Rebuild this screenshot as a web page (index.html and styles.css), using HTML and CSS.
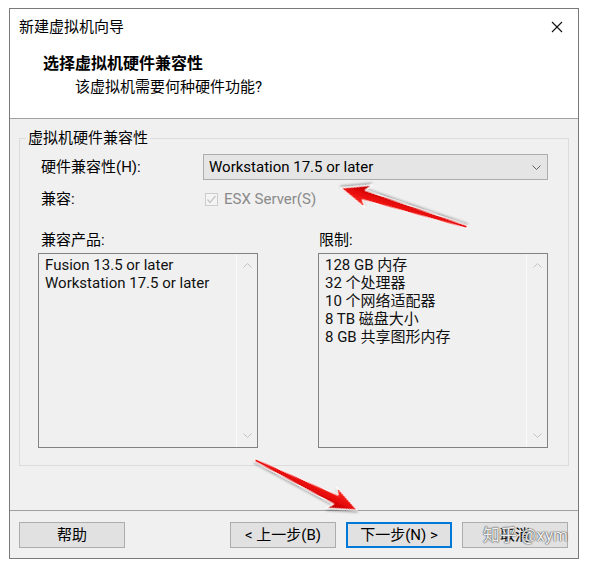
FILE: index.html
```html
<!DOCTYPE html>
<html lang="zh-CN">
<head>
<meta charset="utf-8">
<title>新建虚拟机向导</title>
<link rel="stylesheet" href="styles.css">
</head>
<body>
<div class="window">
  <div class="titlebar">
    <span class="title">新建虚拟机向导</span>
    <svg class="close" width="12" height="12" viewBox="0 0 12 12"><path d="M1 1L11 11M11 1L1 11" stroke="#111" stroke-width="1.1" fill="none"/></svg>
  </div>
  <div class="header">
    <div class="h-title">选择虚拟机硬件兼容性</div>
    <div class="h-sub">该虚拟机需要何种硬件功能?</div>
  </div>
  <div class="main">
    <div class="group">
      <div class="group-title">虚拟机硬件兼容性</div>
      <div class="row">
        <span class="label">硬件兼容性(H):</span>
        <div class="combo">
          <span class="combo-text">Workstation 17.5 or later</span>
          <svg class="chev" width="9" height="5" viewBox="0 0 9 5"><path d="M0.5 0.5L4.5 4.5L8.5 0.5" stroke="#606060" fill="none"/></svg>
        </div>
      </div>
      <div class="row row-compat">
        <span class="label">兼容:</span>
        <span class="check"><svg width="11" height="11" viewBox="0 0 11 11"><path d="M1.5 5.5L4 8.5L9.5 2" stroke="#c4c4c4" stroke-width="1.2" fill="none"/></svg></span>
        <span class="disabled">ESX Server(S)</span>
      </div>
      <div class="lists">
        <div class="col col-left">
          <div class="col-label">兼容产品:</div>
          <div class="listbox">
            <ul class="items">
              <li>Fusion 13.5 or later</li>
              <li>Workstation 17.5 or later</li>
            </ul>
            <div class="vscroll">
              <svg width="9" height="5" viewBox="0 0 9 5"><path d="M0.5 4.5L4.5 0.5L8.5 4.5" stroke="#c2c2c2" fill="none"/></svg>
              <svg width="9" height="5" viewBox="0 0 9 5"><path d="M0.5 0.5L4.5 4.5L8.5 0.5" stroke="#c2c2c2" fill="none"/></svg>
            </div>
          </div>
        </div>
        <div class="col col-right">
          <div class="col-label">限制:</div>
          <div class="listbox">
            <ul class="items">
              <li>128 GB 内存</li>
              <li>32 个处理器</li>
              <li>10 个网络适配器</li>
              <li>8 TB 磁盘大小</li>
              <li>8 GB 共享图形内存</li>
            </ul>
            <div class="vscroll">
              <svg width="9" height="5" viewBox="0 0 9 5"><path d="M0.5 4.5L4.5 0.5L8.5 4.5" stroke="#c2c2c2" fill="none"/></svg>
              <svg width="9" height="5" viewBox="0 0 9 5"><path d="M0.5 0.5L4.5 4.5L8.5 0.5" stroke="#c2c2c2" fill="none"/></svg>
            </div>
          </div>
        </div>
      </div>
    </div>
  </div>
  <div class="footer">
    <button class="btn">帮助</button>
    <div class="nav">
      <button class="btn">&lt; 上一步(B)</button>
      <button class="btn btn-default">下一步(N) &gt;</button>
      <button class="btn">取消</button>
    </div>
  </div>
  <div class="watermark">知乎 @xym</div>
</div>
<svg class="arrows" width="590" height="563" viewBox="0 0 590 563">
  <defs>
    <linearGradient id="red" x1="0" y1="0" x2="0" y2="1">
      <stop offset="0" stop-color="#ff3a2a"/>
      <stop offset="0.5" stop-color="#e80808"/>
      <stop offset="1" stop-color="#b80000"/>
    </linearGradient>
    <filter id="sh" x="-20%" y="-50%" width="140%" height="200%">
      <feDropShadow dx="1" dy="1.5" stdDeviation="1.2" flood-color="#000" flood-opacity="0.35"/>
    </filter>
  </defs>
  <polygon transform="translate(467 227) rotate(197.2)" points="0,-1.5 108,-5 103,-12 132,0 103,12 108,5 0,1.5" fill="url(#red)" stroke="#fff" stroke-width="1.2" stroke-linejoin="round" filter="url(#sh)"/>
  <polygon transform="translate(255 460) rotate(26.1)" points="0,-1.5 90,-5 85,-12 114,0 85,12 90,5 0,1.5" fill="url(#red)" stroke="#fff" stroke-width="1.2" stroke-linejoin="round" filter="url(#sh)"/>
</svg>
</body>
</html>
```
FILE: styles.css
```css
* { box-sizing: border-box; }
html, body { margin: 0; padding: 0; }
body {
  background: #ffffff;
  font-family: Roboto, "Noto Sans CJK SC", sans-serif;
  font-size: 15px;
  color: #000;
  width: 590px;
  height: 563px;
  overflow: hidden;
}
.window {
  position: relative;
  margin: 8px 0 0 9px;
  width: 570px;
  height: 551px;
  border: 1px solid #7a7a7a;
  background: #f0f0f0;
  display: flex;
  flex-direction: column;
}
.titlebar {
  height: 36px;
  background: #fff;
  display: flex;
  align-items: center;
  justify-content: space-between;
  padding: 0 15px 0 9px;
  line-height: 20px;
}
.close { display: block; }
.header {
  height: 74px;
  background: #fff;
  border-bottom: 1px solid #a0a0a0;
  padding: 9px 0 0 33px;
}
.h-title {
  font-weight: bold;
  font-size: 16px;
  line-height: 20px;
}
.h-sub {
  margin: 3px 0 0 32px;
  line-height: 20px;
}
.main {
  height: 391px;
  padding-top: 19px;
}
.group {
  margin: 0 9px;
  height: 328px;
  border: 1px solid #dcdcdc;
}
.group-title {
  margin: -11px 0 0 6px;
  padding: 0 2px;
  width: fit-content;
  background: #f0f0f0;
  line-height: 20px;
}
.row {
  display: flex;
  align-items: center;
  height: 26px;
  margin-top: 6px;
  padding-left: 21px;
}
.label {
  width: 162px;
  flex: none;
  line-height: 20px;
}
.combo {
  width: 345px;
  height: 26px;
  background: #e5e5e5;
  border: 1px solid #adadad;
  display: flex;
  align-items: center;
  justify-content: space-between;
  padding: 0 6px 0 5px;
}
.chev { display: block; }
.check {
  margin-left: 2px;
  width: 13px;
  height: 13px;
  border: 1px solid #cccccc;
  background: #f4f4f4;
  display: flex;
  align-items: center;
  justify-content: center;
}
.check svg { display: block; }
.disabled {
  margin-left: 6px;
  color: #8a8a8a;
}
.lists {
  display: flex;
  gap: 60px;
  padding-left: 18px;
  margin-top: 18px;
}
.col-left { width: 220px; }
.col-right { width: 230px; }
.col-label {
  line-height: 20px;
  padding-left: 3px;
}
.col-right .col-label { padding-left: 1px; }
.listbox {
  margin-top: 3px;
  height: 195px;
  border: 1px solid #828282;
  background: #f0f0f0;
  display: flex;
}
.items {
  flex: 1;
  margin: 0;
  padding: 2px 0 0 6px;
  list-style: none;
  line-height: 18px;
  color: #111;
}
.vscroll {
  width: 21px;
  border-left: 1px solid #fafafa;
  display: flex;
  flex-direction: column;
  align-items: center;
  justify-content: space-between;
  padding: 9px 0 9px 0;
}
.vscroll svg { display: block; }
.footer {
  height: 48px;
  border-top: 1px solid #a0a0a0;
  display: flex;
  justify-content: space-between;
  padding: 11px 10px 0 9px;
}
.nav {
  display: flex;
  gap: 10px;
}
.btn {
  width: 106px;
  height: 26px;
  background: #e1e1e1;
  border: 1px solid #adadad;
  font-family: Roboto, "Noto Sans CJK SC", sans-serif;
  font-size: 15px;
  color: #000;
  padding: 0;
  line-height: 20px;
}
.btn-default {
  border: 2px solid #0078d7;
}
.watermark {
  position: absolute;
  left: 473px;
  top: 516px;
  font-size: 17px;
  line-height: 20px;
  color: rgba(255,255,255,0.92);
  text-shadow: 0 0 1px #555, 0 0 1px #555, 0 0 2px #888;
  white-space: nowrap;
}
.arrows {
  position: absolute;
  left: 0;
  top: 0;
  pointer-events: none;
}
```
